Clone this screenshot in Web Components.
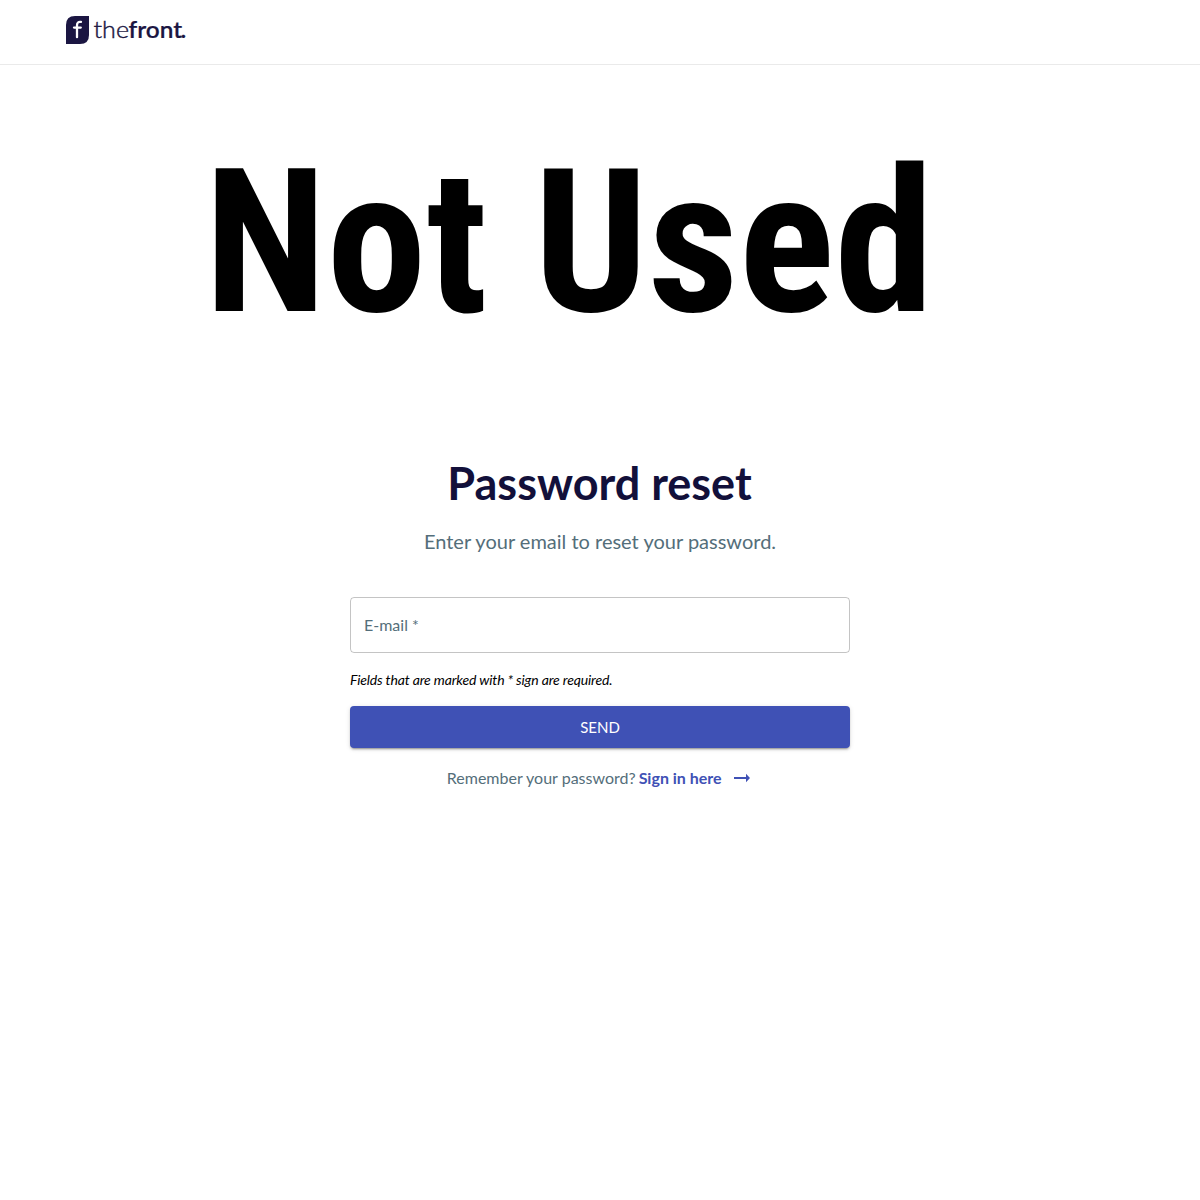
<!DOCTYPE html>
<html lang="en">
<head>
<meta charset="utf-8">
<title>Password reset</title>
<style>
  html, body { margin: 0; background: #fff; }
  body { font-family: Lato, sans-serif; min-height: 1200px; }
</style>
</head>
<body>
<front-page></front-page>
<script>
const define = (name, html) => {
  const template = document.createElement('template');
  template.innerHTML = html;
  customElements.define(name, class extends HTMLElement {
    constructor() {
      super();
      this.attachShadow({ mode: 'open' }).append(template.content.cloneNode(true));
    }
  });
};

define('front-logo', `
  <style>
    :host { display: block; width: 120px; height: 28px; }
    svg { display: block; overflow: visible; }
    text { font-family: Lato, sans-serif; fill: #1b1642; }
  </style>
  <svg width="120" height="28" viewBox="0 0 120 28" role="img">
    <path d="M0 28V9Q0 0 9 0H23V19Q23 28 14 28Z" fill="#1b1642"/>
    <path d="M15 5.9C12.3 5.4 11 6.8 11 9.4V21.2M8 11.6H14.8" fill="none" stroke="#fff" stroke-width="2.3" stroke-linecap="round"/>
    <text x="27.5" y="22.2" font-size="23" font-weight="300" textLength="35.5" lengthAdjust="spacingAndGlyphs" stroke="#1b1642" stroke-width=".4">the</text>
    <text x="62.5" y="22.2" font-size="23" font-weight="600" textLength="57.7" lengthAdjust="spacingAndGlyphs" stroke="#1b1642" stroke-width=".2">front<tspan dx="-1.6">.</tspan></text>
  </svg>`);

define('top-bar', `
  <style>
    :host { display: flex; box-sizing: border-box; height: 65px; padding: 16px 66px 0; border-bottom: 1px solid #eaeaea; }
  </style>
  <slot></slot>`);

define('page-banner', `
  <style>
    :host { display: block; padding: 61px 0 0 204.3px; height: 331px; font: 700 200px/234px "Roboto Condensed", Roboto, sans-serif; font-stretch: 75%; color: #000; white-space: nowrap; }
  </style>
  <slot></slot>`);

define('section-header', `
  <style>
    :host { display: flex; flex-direction: column; align-items: center; text-align: center; }
    h1 { margin: 0; font-size: 45px; line-height: 52px; font-weight: 700; color: #12103a; padding-right: 1px; }
    p { margin: 16px 0 0; font-size: 20px; line-height: 32px; color: #546e7a; }
  </style>
  <h1><slot name="title"></slot></h1>
  <p><slot name="subtitle"></slot></p>`);

define('outlined-field', `
  <style>
    :host { display: flex; align-items: center; box-sizing: border-box; height: 56px; padding: 0 13px 2px; border: 1px solid rgba(0,0,0,.23); border-radius: 4px; font-size: 16px; color: #546e7a; }
  </style>
  <span><slot></slot></span>`);

define('send-button', `
  <style>
    :host { display: block; }
    button { display: block; width: 100%; height: 42px; border: 0; border-radius: 4px; padding: 0; background: #3f51b5; color: #fff; font: 400 15px/26px Lato, sans-serif; letter-spacing: 0; box-shadow: 0 3px 1px -2px rgba(0,0,0,.2), 0 2px 2px rgba(0,0,0,.14), 0 1px 5px rgba(0,0,0,.12); }
  </style>
  <button type="button"><slot></slot></button>`);

define('arrow-link', `
  <style>
    :host { display: inline-flex; align-items: center; color: #3f51b5; font-weight: 700; }
    svg { display: block; margin-left: 12px; }
  </style>
  <slot></slot>
  <svg width="16" height="10" viewBox="0 0 16 10"><path d="M0 3.9H12V.8L16 5L12 9.2V6.1H0Z" fill="#3f51b5"/></svg>`);

define('reset-form', `
  <style>
    :host { display: flex; flex-direction: column; width: 500px; }
    .note { margin: 16px 0; font-size: 14px; line-height: 21px; font-style: italic; letter-spacing: -.14px; color: #000; }
    .foot { display: flex; justify-content: center; gap: 3px; margin-top: 16px; padding-right: 3.6px; font-size: 16px; line-height: 28px; color: #546e7a; }
  </style>
  <outlined-field>E-mail *</outlined-field>
  <div class="note">Fields that are marked with * sign are required.</div>
  <send-button>SEND</send-button>
  <div class="foot"><span>Remember your password?</span><arrow-link>Sign in here</arrow-link></div>`);

define('front-page', `
  <style>
    :host { display: block; }
    main { display: flex; flex-direction: column; align-items: center; gap: 40px; }
  </style>
  <top-bar><front-logo></front-logo></top-bar>
  <page-banner>Not Used</page-banner>
  <main>
    <section-header><span slot="title">Password reset</span><span slot="subtitle">Enter your email to reset your password.</span></section-header>
    <reset-form></reset-form>
  </main>`);
</script>
</body>
</html>
